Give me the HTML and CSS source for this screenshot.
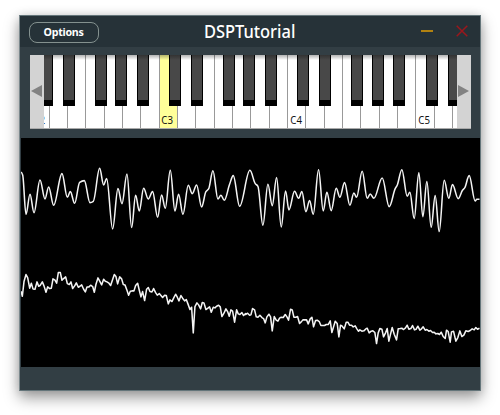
FILE: index.html
```html
<!DOCTYPE html>
<html lang="en">
<head>
<meta charset="utf-8">
<title>DSPTutorial</title>
<link rel="stylesheet" href="styles.css">
</head>
<body>
<main class="window">
  <header class="titlebar">
    <button class="options"><span>Options</span></button>
    <h1 class="title">DSPTutorial</h1>
    <div class="controls">
      <svg class="minimise" viewBox="0 0 12 12"><path d="M0 6H12"/></svg>
      <svg class="close" viewBox="0 0 12 12"><path d="M.7.8 11.3 11.2M11.3.8.7 11.2"/></svg>
    </div>
  </header>
  <section class="keyboard">
    <div class="scroll"><svg viewBox="0 0 11 12"><path d="M0 6 11 0V12Z"/></svg></div>
    <div class="keys">
      <div class="octave"><i class="white"><span>C2</span></i><i class="white"></i><i class="white"></i><i class="white"></i><i class="white"></i><i class="white"></i><i class="white"></i><b class="black cs"></b><b class="black ds"></b><b class="black fs"></b><b class="black gs"></b><b class="black as"></b></div>
      <div class="octave"><i class="white pressed"><span>C3</span></i><i class="white"></i><i class="white"></i><i class="white"></i><i class="white"></i><i class="white"></i><i class="white"></i><b class="black cs"></b><b class="black ds"></b><b class="black fs"></b><b class="black gs"></b><b class="black as"></b></div>
      <div class="octave"><i class="white"><span>C4</span></i><i class="white"></i><i class="white"></i><i class="white"></i><i class="white"></i><i class="white"></i><i class="white"></i><b class="black cs"></b><b class="black ds"></b><b class="black fs"></b><b class="black gs"></b><b class="black as"></b></div>
      <div class="octave"><i class="white"><span>C5</span></i><i class="white"></i><i class="white"></i><i class="white"></i><i class="white"></i><i class="white"></i><i class="white"></i><b class="black cs"></b><b class="black ds"></b></div>
    </div>
    <div class="scroll"><svg viewBox="0 0 11 12"><path d="M11 6 0 0V12Z"/></svg></div>
  </section>
  <svg class="scope" viewBox="0 0 1376 686" preserveAspectRatio="none">
    <path id="wave"/>
    <path id="spectrum"/>
  </svg>
</main>
<script src="scope.js"></script>
</body>
</html>
```
FILE: styles.css
```css
* { box-sizing: border-box; }
body {
  margin: 0;
  height: 415px;
  padding: 14.5px 0 0 19px;
  background: #fff;
  font-family: "Noto Sans", "Open Sans", sans-serif;
}
.window {
  width: 462px;
  height: 376.5px;
  background: #323e44;
  border: 1px solid #64757a;
  border-left-color: #7b898d;
  box-shadow: 0 7px 14px rgba(0,0,0,.38), 0 0 9px rgba(0,0,0,.12);
}
.titlebar {
  height: 31px;
  display: grid;
  grid-template-columns: 1fr auto 1fr;
  align-items: center;
  padding: 0 12px 0 8.5px;
  background: #263238;
}
.options {
  justify-self: start;
  width: 70px;
  height: 21px;
  margin-top: 2px;
  padding: 0 0 1px;
  border: 1px solid #84918f;
  border-radius: 8px;
  background: #263238;
  color: #fff;
  font: 700 11px "Noto Sans", sans-serif;
  letter-spacing: -.3px;
}
.options span { display: inline-block; transform: scaleX(.97); }
.title {
  margin: 0 0 0 2px;
  color: #fff;
  font: 500 17.5px/24px "Noto Sans", sans-serif;
  transform: translateY(-.5px) scaleX(.94);
}
.controls { justify-self: end; display: flex; gap: 23px; }
.controls svg { width: 12px; height: 12px; fill: none; }
.minimise { stroke: #b18211; stroke-width: 2; }
.close { stroke: #9b171c; stroke-width: 1.5; }
.keyboard {
  display: flex;
  width: 441px;
  height: 73.5px;
  margin: 8.5px 0 0 9.5px;
  border-bottom: 1px solid #aaa;
  background: #fff;
}
.scroll {
  width: 14px;
  flex: none;
  display: flex;
  align-items: center;
  justify-content: center;
  background: #d3d3d3;
}
.scroll svg { width: 11px; height: 12px; fill: #828282; }
.keys { position: relative; flex: 1; display: flex; overflow: hidden; }
.keys::after {
  content: "";
  position: absolute;
  inset: 0 0 auto;
  height: 5px;
  background: linear-gradient(rgba(0,0,0,.3), transparent);
}
.octave { position: relative; flex: none; display: flex; width: 128.35px; }
.octave:first-child { margin-left: -13.2px; }
.white {
  flex: 1;
  display: flex;
  align-items: flex-end;
  justify-content: center;
  border-left: 1px solid #999;
  background: #fff;
  color: #111;
  font: 400 11.5px/16px "Noto Sans", sans-serif;
}
.white span { transform: translate(-.8px, -.5px) scaleX(.84); }
.pressed { background: #ffff99; }
.black {
  position: absolute;
  top: 0;
  width: 12px;
  height: 51px;
  border: solid #000;
  border-width: 0 1.5px 6px;
  background: #484848;
}
.cs { left: 10.2px; }
.ds { left: 32.2px; }
.fs { left: 64.2px; }
.gs { left: 84.8px; }
.as { left: 106.3px; }
.scope {
  display: block;
  width: 458.5px;
  height: 228.5px;
  margin: 9.5px 0 0 1px;
  background: #000;
  fill: none;
  stroke: #f4f4f4;
  stroke-width: 4.6;
  stroke-linejoin: round;
}
```
FILE: scope.js
```js
// Each block is [x offset, y offset, [x, y, x, y, ...]] in view-box units.
const wave = [
  [-18, 51, [18,52,23,60,33,178,45,118,57,173,75,75,90,132,101,96,116,151,141,56,157,127,166,110,179,145,194,82,208,77,225,143,235,139,254,40,266,90,275,71,293,222,309,101,321,146,336,57,350,218]],
  [327, 51, [17,121,28,168,41,100,55,132,68,110,83,187,95,120,106,160,121,46,135,168,146,118,159,178,175,91,187,116,200,90,215,156,228,110,236,102,249,47,264,132,273,121,283,136,299,88,310,62,329,154]],
  [672, 51, [15,46,31,86,39,94,54,211,69,88,82,152,95,68,109,216,122,108,132,165,149,109,161,130,171,110,183,170,194,137,205,178,221,44,235,168,246,112,259,167,274,100,285,127,299,83,315,151,327,114,335,127]],
  [1017, 51, [7,49,22,130,31,117,42,130,67,69,88,155,106,101,112,91,126,44,142,124,150,112,163,191,177,53,189,185,201,80,214,217,226,122,238,230,253,76,267,130,278,89,295,131,308,106,315,98,328,62,346,138,351,133,359,133]]
];
const spectrum = [
  [-18, 366, [18,94,22,109,27,65,33,44,38,53,44,85,49,70,54,87,60,88,66,66,71,79,76,76,82,66,87,78,93,97,98,81,104,86,109,85,114,57,120,61,125,70,130,38,136,38,141,61,146,56,152,51,157,71,163,74,168,66,173,86,179,78,184,69,190,82,195,79,200,75,206,88,211,96,216,81,222,81,227,76,233,80,238,97,243,73,249,54,255,65,260,75,266,58,271,64,276,66,282,70,287,77,293,59,298,44,303,50,308,72,314,51,320,57,325,74,330,75,336,91,341,106,346,94]],
  [327, 366, [6,93,12,93,17,77,23,70,28,91,33,111,38,95,44,122,50,88,55,83,60,95,66,96,71,86,77,98,82,106,88,101,93,107,98,113,104,106,109,107,115,132,120,120,126,125,131,115,137,103,142,112,147,123,153,107,158,115,164,123,169,119,174,132,180,149,185,142,190,219,195,140,201,129,206,135,212,147,217,128,222,129,228,149,234,145,239,141,244,157,250,142,255,144,260,139,266,136,271,141,276,170,282,160,288,147,293,155,298,169,303,150,308,154,314,187,320,150,325,162,330,164,336,158,341,167,347,161]],
  [672, 426, [2,104,8,100,14,106,18,105,23,86,29,90,34,111,39,112,45,106,51,113,56,116,61,129,66,111,72,103,77,111,82,153,88,110,94,121,99,124,104,115,109,112,115,113,121,104,126,111,131,121,137,88,142,90,147,112,153,112,158,110,164,131,169,126,174,120,180,120,185,120,190,132,196,117,201,112,206,141,212,122,217,121,223,125,228,137,234,137,239,137,244,134,250,134,256,123,261,158,266,141,271,124,277,131,282,171,287,136,292,139,298,147,304,127,309,127,314,136,320,136,325,141,331,138,336,147,341,154]],
  [1017, 426, [0,150,6,154,12,153,17,148,22,145,28,159,34,154,39,153,45,158,50,191,55,159,60,146,66,148,71,171,77,159,82,146,87,184,92,163,97,143,103,163,110,180,115,147,121,146,126,145,131,149,137,144,142,136,147,148,153,146,158,137,164,150,169,148,174,139,180,151,185,147,190,141,196,151,201,149,207,154,212,152,218,158,223,157,228,162,234,161,239,164,244,157,250,170,256,176,260,151,265,155,271,187,275,156,281,154,288,184,294,173,300,153,306,170,312,166,318,153,325,155,331,152,337,147,343,150,348,143,353,148,359,145]]
];

const flatten = blocks => blocks.flatMap(([dx, dy, values]) => {
  const points = [];
  for (let i = 0; i < values.length; i += 2) points.push([values[i] + dx, values[i + 1] + dy]);
  return points;
});

function smooth(points) {
  let d = `M${points[0]}`;
  const slope = i => {
    if (!points[i - 1] || !points[i + 1]) return 0;
    const a = (points[i][1] - points[i - 1][1]) / (points[i][0] - points[i - 1][0]);
    const b = (points[i + 1][1] - points[i][1]) / (points[i + 1][0] - points[i][0]);
    return a * b > 0 ? 2 * a * b / (a + b) : 0;
  };
  for (let i = 1; i < points.length; i++) {
    const [x0, y0] = points[i - 1];
    const [x1, y1] = points[i];
    const h = (x1 - x0) * 0.36;
    d += `C${x0 + h} ${y0 + h * slope(i - 1)} ${x1 - h} ${y1 - h * slope(i)} ${x1} ${y1}`;
  }
  return d;
}

document.getElementById("wave").setAttribute("d", smooth(flatten(wave)));
document.getElementById("spectrum").setAttribute("d", "M" + flatten(spectrum).join("L"));
```
